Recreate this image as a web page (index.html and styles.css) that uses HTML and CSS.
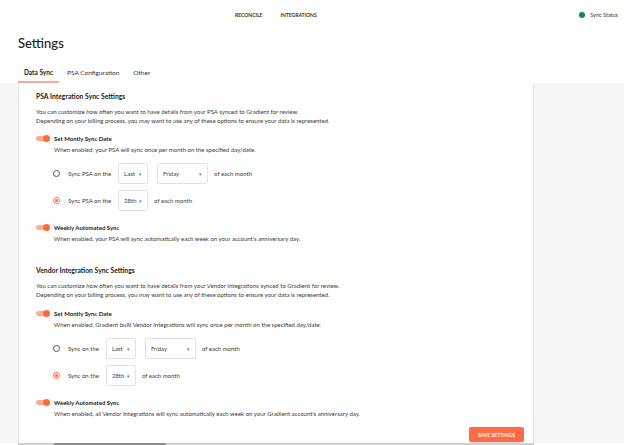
FILE: index.html
```html
<!DOCTYPE html>
<html lang="en">
<head>
  <meta charset="UTF-8" />
  <title>Settings</title>
  <link rel="stylesheet" href="styles.css">
</head>
<body>

  <header class="topbar">
    <nav class="topnav">
      <a href="#">RECONCILE</a>
      <a href="#">INTEGRATIONS</a>
    </nav>
    <div class="sync-status"><span class="dot"></span>Sync Status</div>
  </header>

  <h1 class="page-title">Settings</h1>

  <ul class="tabs">
    <li class="active">Data Sync</li>
    <li>PSA Configuration</li>
    <li>Other</li>
  </ul>

  <main class="content">
    <section class="panel">

      <div class="sync-group">
        <h2>PSA Integration Sync Settings</h2>
        <p class="intro">You can customize how often you want to have details from your PSA synced to Gradient for review.<br>
          Depending on your billing process, you may want to use any of these options to ensure your data is represented.</p>

        <div class="switch-row"><span class="switch on"></span><span class="switch-label">Set Montly Sync Date</span></div>
        <p class="hint">When enabled, your PSA will sync once per month on the specified day/date.</p>

        <div class="radio-row first">
          <span class="radio"></span>
          <span class="radio-label">Sync PSA on the</span>
          <div class="select short">Last <span class="caret">▾</span></div>
          <div class="select wide">Friday <span class="caret">▾</span></div>
          <span>of each month</span>
        </div>
        <div class="radio-row">
          <span class="radio checked"></span>
          <span class="radio-label">Sync PSA on the</span>
          <div class="select short">28th <span class="caret">▾</span></div>
          <span>of each month</span>
        </div>

        <div class="switch-row weekly"><span class="switch on"></span><span class="switch-label">Weekly Automated Sync</span></div>
        <p class="hint">When enabled, your PSA will sync automatically each week on your account's anniversary day.</p>
      </div>

      <div class="sync-group vendor">
        <h2>Vendor Integration Sync Settings</h2>
        <p class="intro">You can customize how often you want to have details from your Vendor Integrations synced to Gradient for review.<br>
          Depending on your billing process, you may want to use any of these options to ensure your data is represented.</p>

        <div class="switch-row"><span class="switch on"></span><span class="switch-label">Set Montly Sync Date</span></div>
        <p class="hint">When enabled, Gradient built Vendor Integrations will sync once per month on the specified day/date.</p>

        <div class="radio-row first">
          <span class="radio"></span>
          <span class="radio-label">Sync on the</span>
          <div class="select short">Last <span class="caret">▾</span></div>
          <div class="select wide">Friday <span class="caret">▾</span></div>
          <span>of each month</span>
        </div>
        <div class="radio-row">
          <span class="radio checked"></span>
          <span class="radio-label">Sync on the</span>
          <div class="select short">28th <span class="caret">▾</span></div>
          <span>of each month</span>
        </div>

        <div class="switch-row weekly"><span class="switch on"></span><span class="switch-label">Weekly Automated Sync</span></div>
        <p class="hint">When enabled, all Vendor Integrations will sync automatically each week on your Gradient account's anniversary day.</p>
      </div>

      <div class="actions">
        <button>SAVE SETTINGS</button>
      </div>
    </section>
    <aside class="side"></aside>
  </main>

  <div class="hscroll"><span class="thumb"></span></div>

</body>
</html>
```

FILE: styles.css
```css
body {
  margin: 0;
  font-family: "Lato", "Liberation Sans", sans-serif;
  color: #2b2b2b;
  background: #ffffff;
  overflow: hidden;
}

/* top bar */
.topbar {
  height: 30px;
  display: flex;
  align-items: center;
  justify-content: space-between;
  padding: 0 6px 0 235px;
}

.topnav {
  display: flex;
  gap: 18px;
}

.topnav a {
  font-size: 5px;
  font-weight: 700;
  color: #333;
  text-decoration: none;
}

.sync-status {
  display: flex;
  align-items: center;
  gap: 5px;
  font-size: 5.5px;
  color: #333;
}

.dot {
  width: 6px;
  height: 6px;
  border-radius: 50%;
  background: #0d8a5f;
}

.page-title {
  margin: 5px 0 0 18px;
  font-size: 13px;
  line-height: 16px;
  font-weight: 500;
  color: #222;
}

/* tabs */
.tabs {
  list-style: none;
  display: flex;
  margin: 17px 0 0 18px;
  padding: 0;
}

.tabs li {
  font-size: 6.5px;
  line-height: 10px;
  padding: 0 6px 3px;
  color: #333;
  border-bottom: 2px solid transparent;
}

.tabs li.active {
  font-weight: 700;
  color: #222;
  border-bottom-color: #f9ab92;
}

.tabs li + li {
  margin-left: 2px;
}

/* main area */
.content {
  display: flex;
  background: #f5f6f6;
  padding-left: 18px;
  height: 360px;
}

.panel {
  width: 481px;
  background: #ffffff;
  border-left: 1px solid #e2e4e4;
  border-right: 1px solid #e2e4e4;
  padding: 0 16px 0 17px;
}

.side {
  flex: 1;
}

.sync-group {
  font-size: 6px;
  color: #3a3a3a;
}

.sync-group h2 {
  margin: 8px 0 0;
  font-size: 6.8px;
  line-height: 10px;
  font-weight: 700;
  color: #222;
}

.sync-group.vendor h2 {
  margin-top: 22px;
}

.intro {
  margin: 6px 0 0;
  line-height: 9px;
}

.switch-row {
  display: flex;
  align-items: center;
  gap: 4px;
  height: 10px;
  margin-top: 8px;
}

.vendor .switch-row {
  margin-top: 9px;
}

.switch-row.weekly,
.vendor .switch-row.weekly {
  margin-top: 11px;
}

.switch {
  position: relative;
  width: 14px;
  height: 5px;
  border-radius: 3px;
  background: #fbae96;
}

.switch.on::after {
  content: "";
  position: absolute;
  right: 0;
  top: -1px;
  width: 7px;
  height: 7px;
  border-radius: 50%;
  background: #ff6a3d;
}

.switch-label {
  font-weight: 700;
  color: #222;
}

.hint {
  margin: 2px 0 0 18px;
  line-height: 9px;
}

.radio-row {
  display: flex;
  align-items: center;
  gap: 6px;
  height: 21px;
  margin: 6px 0 0 17px;
}

.radio-row.first {
  margin-top: 9px;
}

.radio {
  width: 5px;
  height: 5px;
  border: 1px solid #555;
  border-radius: 50%;
  margin-right: 2px;
  position: relative;
}

.radio.checked {
  border-color: #ff6a3d;
}

.radio.checked::after {
  content: "";
  position: absolute;
  left: 1px;
  top: 1px;
  width: 3px;
  height: 3px;
  border-radius: 50%;
  background: #ff6a3d;
}

.radio-label {
  margin-right: 1px;
}

.select {
  display: flex;
  align-items: center;
  justify-content: space-between;
  box-sizing: border-box;
  height: 21px;
  padding: 0 5px;
  border: 1px solid #e3e3e3;
  border-radius: 2px;
  color: #444;
}

.select.short {
  width: 30px;
}

.select.wide {
  width: 51px;
  margin-left: 3px;
}

.caret {
  font-size: 5px;
  color: #777;
}

.actions {
  display: flex;
  justify-content: flex-end;
  margin-top: 9px;
  margin-right: -7px;
}

.actions button {
  width: 55px;
  height: 15px;
  border: none;
  border-radius: 2px;
  background: #ff6b47;
  color: #fff;
  font-family: inherit;
  font-size: 5px;
  font-weight: 700;
  padding: 0;
  box-shadow: 0 1px 1px rgba(0, 0, 0, 0.15);
}

.hscroll {
  margin-left: 18px;
  width: 516px;
  height: 2px;
  background: #cfd1d1;
  position: relative;
}

.hscroll .thumb {
  position: absolute;
  left: 36px;
  width: 112px;
  height: 2px;
  background: #8c8c8c;
}
```
